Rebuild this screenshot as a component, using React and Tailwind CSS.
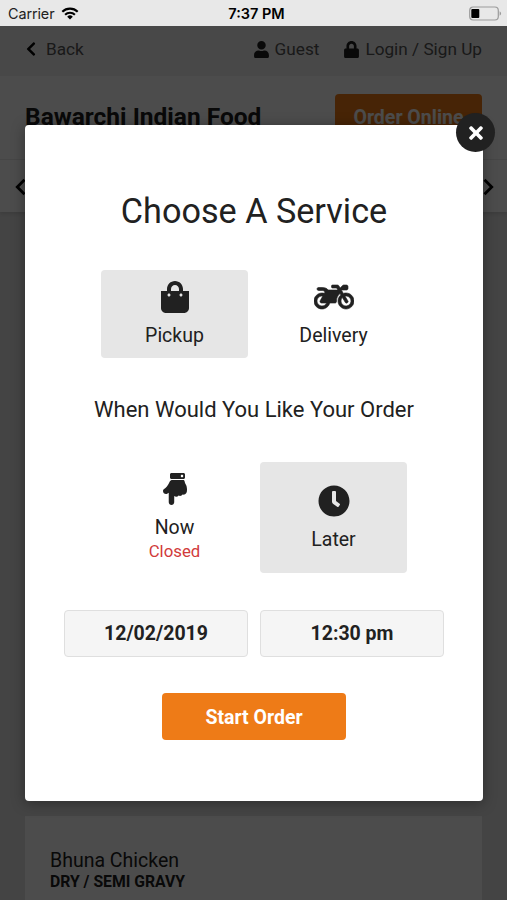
import { useState } from 'react'
import {
  FaChevronLeft, FaClock, FaHandPointDown, FaLock, FaMotorcycle, FaShoppingBag, FaTimes, FaUser,
} from 'react-icons/fa'

export default function App() {
  const [service, setService] = useState('pickup')
  const [time, setTime] = useState('later')

  return (
    <div className="relative flex h-[900px] w-full flex-col overflow-hidden bg-[#e4e4e4] font-['Roboto',sans-serif] text-[#212121]">
      <StatusBar />
      <RestaurantPage />

      {/* Service dialog */}
      <div className="absolute inset-x-0 top-[26px] bottom-0 bg-black/70 px-[25px] pt-[99px]">
        <div className="relative flex h-[676px] w-[458px] flex-col items-center rounded-[4px] bg-white pt-[65px] shadow-[0_2px_14px_rgba(0,0,0,0.35)]">
          <button className="absolute -top-[12px] -right-[12px] flex size-[39px] items-center justify-center rounded-full bg-[#212121] text-white">
            <FaTimes size={20} />
          </button>

          <h1 className="text-[34.2px] leading-[42px] font-normal">Choose A Service</h1>

          <div className="mt-[38px] flex gap-3">
            <Option active={service === 'pickup'} onClick={() => setService('pickup')}
              className="h-[88px]" icon={<FaShoppingBag size={32} />} label="Pickup" />
            <Option active={service === 'delivery'} onClick={() => setService('delivery')}
              className="h-[88px]" icon={<FaMotorcycle size={32} className="w-10 stroke-current stroke-[10]" />} label="Delivery" />
          </div>

          <h2 className="mt-[38px] text-[22px] leading-[28px] font-normal">When Would You Like Your Order</h2>

          <div className="mt-[38px] flex gap-3">
            <Option active={time === 'now'} onClick={() => setTime('now')}
              className="h-[111px]" icon={<FaHandPointDown size={32} />} label="Now" note="Closed" />
            <Option active={time === 'later'} onClick={() => setTime('later')}
              className="h-[111px]" icon={<FaClock size={32} />} label="Later" />
          </div>

          <div className="mt-[37px] flex gap-3">
            <Field value="12/02/2019" />
            <Field value="12:30 pm" />
          </div>

          <button className="mt-[36px] h-[47px] w-[184px] rounded-[4px] bg-[#ee7b17] pt-[2px] text-[19.5px] font-bold text-white">
            Start Order
          </button>
        </div>
      </div>
    </div>
  )
}

function StatusBar() {
  return (
    <div className="flex h-[26px] shrink-0 items-center justify-between bg-[#e8e8e8] pr-[5px] pl-2 font-['Inter',sans-serif] text-sm">
      <div className="flex w-40 items-center gap-[7px] pt-0.5">
        <span className="text-[14.4px] tracking-[-0.1px]">Carrier</span>
        <svg width="18" height="13" viewBox="0 0 18 13" fill="none" stroke="#000" strokeWidth="2.1">
          <path d="M1.3 4.8a11 11 0 0 1 15.4 0" />
          <path d="M4.1 7.7a7 7 0 0 1 9.8 0" />
          <path d="M9 12.6 6.2 9.7a4 4 0 0 1 5.6 0z" fill="#000" stroke="none" />
        </svg>
      </div>
      <span className="pt-0.5 pl-[3px] text-[14.5px] font-semibold text-black">7:37 PM</span>
      <div className="flex w-40 justify-end">
        <svg width="33" height="15" viewBox="0 0 33 15">
          <rect x="0.7" y="1" width="28.6" height="13" rx="3.5" fill="none" stroke="#9b9b9b" strokeWidth="1.2" />
          <rect x="2.3" y="3" width="8" height="9" rx="1" fill="#000" />
          <path d="M30.6 5.3c2 .8 2 3.6 0 4.4z" fill="#9b9b9b" />
        </svg>
      </div>
    </div>
  )
}

function RestaurantPage() {
  return (
    <div className="flex flex-1 flex-col">
      <div className="flex h-[50px] items-center justify-between bg-[#f1f1f1] pr-[25px] pb-[3px] pl-[26px] text-[17.2px] text-[#555]">
        <div className="flex items-center gap-[10px]">
          <FaChevronLeft size={16} className="w-[10px] text-black" />
          Back
        </div>
        <div className="flex items-center">
          <FaUser size={17} className="mr-[6px] w-[15px] text-[#212121]" />
          Guest
          <FaLock size={17} className="mr-[6px] ml-[25px] w-[15px] text-[#212121]" />
          Login / Sign Up
        </div>
      </div>

      <div className="flex h-[84px] items-start justify-between border-b border-[#eee] bg-white px-[25px] pt-[18px]">
        <div className="pt-[8px] text-[24.5px] leading-[30px] font-bold">Bawarchi Indian Food</div>
        <div className="flex h-[47px] w-[147px] items-center justify-center rounded-[4px] bg-[#ee7b17] text-[19.5px] font-bold text-white">
          Order Online
        </div>
      </div>

      {/* Category scroller */}
      <div className="flex h-[52px] items-center justify-between bg-white pt-[2px] pr-[11px] pl-[13px] shadow-[0_2px_4px_rgba(0,0,0,0.12)]">
        <NavArrow />
        <NavArrow className="rotate-180" />
      </div>

      <div className="mx-[25px] mt-[604px] h-[84px] shrink-0 bg-white px-[25px] pt-[33px]">
        <div className="text-[19.5px] leading-[24px]">Bhuna Chicken</div>
        <div className="text-[15.75px] leading-[17px] font-bold">DRY / SEMI GRAVY</div>
      </div>
    </div>
  )
}

function NavArrow({ className }) {
  return (
    <svg className={className} width="14" height="18" viewBox="0 0 14 18" fill="none" stroke="#000" strokeWidth="2.8">
      <path d="M11.5 1.8 4.3 9l7.2 7.2" />
    </svg>
  )
}

function Option({ active, icon, label, note, className, onClick }) {
  return (
    <button
      onClick={onClick}
      className={`flex w-[147px] flex-col items-center justify-center rounded-[4px] pt-[1px] ${className} ${active ? 'bg-[#e6e6e6]' : ''}`}
    >
      {icon}
      <span className="mt-[10px] text-[19.5px] leading-[25px]">{label}</span>
      {note && <span className="text-[16.8px] leading-[23px] text-[#d13b3b]">{note}</span>}
    </button>
  )
}

function Field({ value }) {
  return (
    <div className="flex h-[47px] w-[184px] items-center justify-center rounded-[4px] border border-[#dfdfdf] bg-[#f5f5f5] pt-[1px] text-[19.5px] font-bold">
      {value}
    </div>
  )
}
